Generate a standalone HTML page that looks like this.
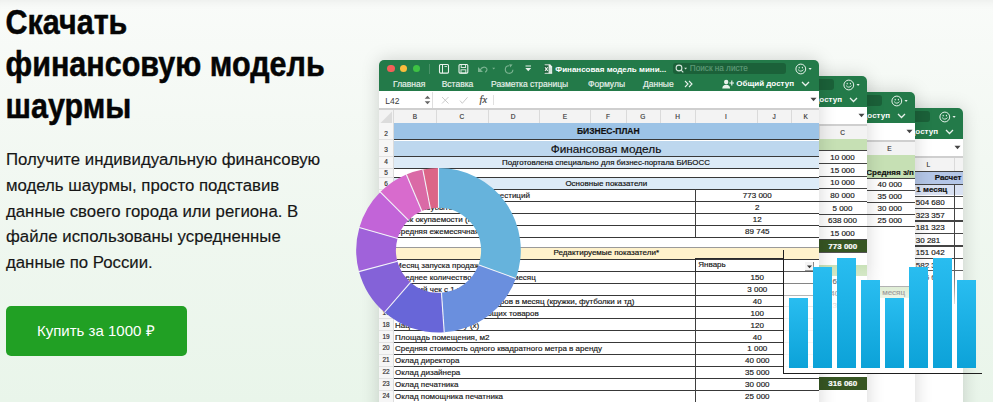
<!DOCTYPE html>
<html><head><meta charset="utf-8">
<style>
*{margin:0;padding:0;box-sizing:border-box}
html,body{width:993px;height:408px;overflow:hidden;background:#fff;font-family:"Liberation Sans",sans-serif}
#stage{position:absolute;left:0;top:0;width:993px;height:402px;overflow:hidden;background:linear-gradient(180deg,#f9fbf9 0%,#f2f8f2 40%,#e9f5ea 100%);box-shadow:inset 0 10px 10px -8px rgba(0,0,0,0.06)}
.a{position:absolute}
.t{position:absolute;white-space:nowrap;line-height:1}
.h1{font-weight:bold;font-size:30.5px;color:#050505;transform-origin:0 25.8px;transform:scaleY(1.13);-webkit-text-stroke:0.45px #050505}
.p{font-size:16.8px;color:#161616;transform-origin:0 14.2px;transform:scaleY(1.03);-webkit-text-stroke:0.15px #161616}
.win{position:absolute;width:440px;height:360px;background:#fff;border-radius:5px 5px 0 0;overflow:hidden;box-shadow:0 0 18px rgba(0,0,0,0.17)}
.tb{position:absolute;left:0;top:0;width:440px;height:31px;background:#237a49}
.fb{position:absolute;left:0;top:31px;width:440px;height:16.5px;background:#fff}
.gl{position:absolute;left:0;top:47.5px;width:440px;height:2px;background:#cfcfcf}
.ch{position:absolute;left:0;top:49.5px;width:440px;height:13.5px;background:#f3f3f3}
.win .t{-webkit-text-stroke:0.18px currentColor}
.cl{font-size:6.5px;color:#444}
.tab{font-size:9.2px;color:#eef5f0}
.hl{position:absolute;height:1px;background:#3d3d3d}
.vl{position:absolute;width:1px;background:#3d3d3d}
</style></head><body><div id="stage">

<div class="t h1" style="left:5.5px;top:7.9px">Скачать</div>
<div class="t h1" style="left:5.5px;top:49.6px">финансовую модель</div>
<div class="t h1" style="left:5.5px;top:91.5px">шаурмы</div>
<div class="t p" style="left:6px;top:152.0px">Получите индивидуальную финансовую</div>
<div class="t p" style="left:6px;top:177.8px">модель шаурмы, просто подставив</div>
<div class="t p" style="left:6px;top:203.7px">данные своего города или региона. В</div>
<div class="t p" style="left:6px;top:229.4px">файле использованы усредненные</div>
<div class="t p" style="left:6px;top:255.1px">данные по России.</div>
<div class="a" style="left:6px;top:306px;width:181px;height:50px;background:#21a024;border-radius:5px"></div>
<div class="t" style="left:37px;top:323.2px;font-size:15px;color:#fff">Купить за 1000 ₽</div>
<div class="win" style="left:379px;top:60px;z-index:4"><div class="tb"></div><div class="a" style="left:8.3px;top:4.9px;width:7.4px;height:7.4px;border-radius:50%;background:#f25f58"></div><div class="a" style="left:20.8px;top:4.9px;width:7.4px;height:7.4px;border-radius:50%;background:#f9bd3d"></div><div class="a" style="left:33.6px;top:4.9px;width:7.4px;height:7.4px;border-radius:50%;background:#3ec244"></div><div class="a" style="left:49.60px;top:3.50px;width:0.80px;height:10.50px;background:rgba(255,255,255,0.18);"></div><svg class="a" style="left:59px;top:3px" width="100" height="12" viewBox="0 0 100 12"><rect x="1.5" y="1.5" width="9" height="8.6" rx="1" fill="none" stroke="#e9f2ec" stroke-width="1.1"/><line x1="4.5" y1="1.5" x2="4.5" y2="10" stroke="#e9f2ec" stroke-width="1"/><path d="M6.5 3.5h2.5" stroke="#e9f2ec" stroke-width="0.8"/><rect x="21" y="1.5" width="8.8" height="8.6" rx="1" fill="none" stroke="#e9f2ec" stroke-width="1.1"/><rect x="23.2" y="1.5" width="4.4" height="3" fill="none" stroke="#e9f2ec" stroke-width="0.9"/><rect x="23" y="6.8" width="4.8" height="3.3" fill="none" stroke="#e9f2ec" stroke-width="0.9"/><path d="M40 8.9 L40 3.9 L45 8.9 Z" fill="#7bb391"/><path d="M41.8 7.2 Q44.6 3 47.6 4.4 Q50.6 6.4 47.2 9.2" fill="none" stroke="#7bb391" stroke-width="1.15"/><path d="M54.2 4.7 L57.2 4.7 L55.7 6.5 Z" fill="#7bb391"/><path d="M74.9 6.8 A3.8 3.8 0 1 1 71.1 2.7" fill="none" stroke="#7bb391" stroke-width="1.15"/><path d="M71.2 1.2 L74.6 1.4 L72.2 4.6 Z" fill="#7bb391"/><line x1="87.5" y1="3" x2="93" y2="3" stroke="#e9f2ec" stroke-width="1"/><path d="M87.3 5 L93.2 5 L90.25 8.3 Z" fill="#e9f2ec"/></svg><svg class="a" style="left:163.5px;top:2.8px" width="12" height="12" viewBox="0 0 12 12"><path d="M1 1.2 H7.6 L9.6 3.2 V10.8 H1 Z" fill="#1d5f3a"/><path d="M5.6 1.8 H7.6 L9.2 3.4 V10.3 H5.6 Z" fill="#eef5f0"/><path d="M1.6 1.8 H7.4 M1.6 10.3 H9.2" stroke="#eef5f0" stroke-width="0.9"/><path d="M2 4.2 L4.7 7.9 M4.7 4.2 L2 7.9" stroke="#eef5f0" stroke-width="1.1"/><path d="M6.8 4.5 V9.5 M8 4.5 V9.5" stroke="#9fc7ae" stroke-width="0.5"/></svg><div class="t" style="left:176.3px;top:5.63px;font-size:8px;color:#ffffff;font-weight:bold;-webkit-text-stroke:0;">Финансовая модель мини...</div><div class="t" style="left:14.0px;top:20.10px;font-size:8.5px;color:#e6f0ea;">Главная</div><div class="t" style="left:62.7px;top:20.10px;font-size:8.5px;color:#e6f0ea;">Вставка</div><div class="t" style="left:112.0px;top:20.10px;font-size:8.5px;color:#e6f0ea;">Разметка страницы</div><div class="t" style="left:209.0px;top:20.10px;font-size:8.5px;color:#e6f0ea;">Формулы</div><div class="t" style="left:264.0px;top:20.10px;font-size:8.5px;color:#e6f0ea;">Данные</div><svg class="a" style="left:305px;top:20px" width="9" height="8" viewBox="0 0 9 8"><path d="M1 1 L4 4 L1 7 M5 1 L8 4 L5 7" fill="none" stroke="#e6f0ea" stroke-width="1.1"/></svg><div class="a" style="left:293.50px;top:2.70px;width:113.00px;height:11.60px;background:#1b6139;border-radius:3px"></div><svg class="a" style="left:296px;top:4px" width="14" height="10" viewBox="0 0 14 10"><circle cx="4" cy="4" r="2.9" fill="none" stroke="#d5e6dc" stroke-width="1.1"/><line x1="6.1" y1="6.1" x2="8.3" y2="8.3" stroke="#d5e6dc" stroke-width="1.2"/><path d="M9.2 3.8 L12 3.8 L10.6 5.4 Z" fill="#d5e6dc"/></svg><div class="t" style="left:310.8px;top:4.86px;font-size:8.2px;color:#5e9a77;">Поиск на листе</div><svg class="a" style="left:415.5px;top:2.8px" width="18" height="12" viewBox="0 0 18 12"><circle cx="5.8" cy="6" r="4.9" fill="none" stroke="#e8f2ec" stroke-width="1"/><ellipse cx="4.2" cy="4.6" rx="0.6" ry="0.9" fill="#e8f2ec"/><ellipse cx="7.4" cy="4.6" rx="0.6" ry="0.9" fill="#e8f2ec"/><path d="M3.1 6.6 Q5.8 9.8 8.5 6.6" fill="none" stroke="#e8f2ec" stroke-width="0.9"/><path d="M13.5 5 L16.7 5 L15.1 7 Z" fill="#e8f2ec"/></svg><svg class="a" style="left:343px;top:19px" width="12" height="10" viewBox="0 0 12 10"><circle cx="4.2" cy="3" r="2.2" fill="#e9f2ec"/><path d="M0.3 9.5 Q0.5 5.8 4.2 5.8 Q7.9 5.8 8.1 9.5 Z" fill="#e9f2ec"/><path d="M9.8 1.5 V6.5 M7.3 4 H12" stroke="#e9f2ec" stroke-width="1.2"/></svg><div class="t" style="left:357.3px;top:20.43px;font-size:8px;color:#ffffff;font-weight:bold;-webkit-text-stroke:0;">Общий доступ</div><svg class="a" style="left:422px;top:21px" width="9" height="6" viewBox="0 0 9 6"><path d="M1 1 L4.5 4.5 L8 1" fill="none" stroke="#e9f2ec" stroke-width="1.3"/></svg><div class="fb"></div><div class="t" style="left:6.3px;top:36.60px;font-size:8.5px;color:#3a3a3a;-webkit-text-stroke:0;">L42</div><svg class="a" style="left:45px;top:35px" width="7" height="10" viewBox="0 0 7 10"><path d="M0.7 3.8 L3.5 0.8 L6.3 3.8 Z M0.7 6.2 L3.5 9.2 L6.3 6.2 Z" fill="#666"/></svg><div class="a" style="left:53.40px;top:31.50px;width:0.80px;height:16.00px;background:#dedede;"></div><svg class="a" style="left:62px;top:36px" width="30" height="9" viewBox="0 0 30 9"><path d="M1 1 L7.5 7.5 M7.5 1 L1 7.5" stroke="#c4c4c4" stroke-width="0.9"/><path d="M19 4.6 L21.3 7.3 L26.5 1.3" fill="none" stroke="#c4c4c4" stroke-width="0.9"/></svg><div class="t" style="left:100.5px;top:35.31px;font-size:10.5px;color:#444;font-family:'Liberation Serif',serif;"><i>fx</i></div><div class="a" style="left:113.60px;top:34.50px;width:0.80px;height:10.00px;background:#e0e0e0;"></div><svg class="a" style="left:431px;top:37px" width="7" height="5" viewBox="0 0 7 5"><path d="M0.5 0.8 L6.5 0.8 L3.5 4.3 Z" fill="#444"/></svg><div class="gl"></div><div class="ch"></div><div class="a" style="left:-379px;top:-60px;width:993px;height:402px"><svg class="a" style="left:380px;top:110.5px" width="12" height="12" viewBox="0 0 12 12"><path d="M12 0.5 L12 12 L0.5 12 Z" fill="#dcdcdc"/></svg><div class="a" style="left:393.00px;top:109.50px;width:0.80px;height:13.50px;background:#dadada;"></div><div class="a" style="left:436.20px;top:109.50px;width:0.80px;height:13.50px;background:#dadada;"></div><div class="a" style="left:488.40px;top:109.50px;width:0.80px;height:13.50px;background:#dadada;"></div><div class="a" style="left:539.00px;top:109.50px;width:0.80px;height:13.50px;background:#dadada;"></div><div class="a" style="left:590.00px;top:109.50px;width:0.80px;height:13.50px;background:#dadada;"></div><div class="a" style="left:626.00px;top:109.50px;width:0.80px;height:13.50px;background:#dadada;"></div><div class="a" style="left:660.00px;top:109.50px;width:0.80px;height:13.50px;background:#dadada;"></div><div class="a" style="left:695.00px;top:109.50px;width:0.80px;height:13.50px;background:#dadada;"></div><div class="a" style="left:756.50px;top:109.50px;width:0.80px;height:13.50px;background:#dadada;"></div><div class="a" style="left:791.40px;top:109.50px;width:0.80px;height:13.50px;background:#dadada;"></div><div class="t" style="left:264.9px;width:300px;text-align:center;top:113.80px;font-size:6.5px;color:#3a3a3a;">B</div><div class="t" style="left:311.9px;width:300px;text-align:center;top:113.80px;font-size:6.5px;color:#3a3a3a;">C</div><div class="t" style="left:363.0px;width:300px;text-align:center;top:113.80px;font-size:6.5px;color:#3a3a3a;">D</div><div class="t" style="left:414.9px;width:300px;text-align:center;top:113.80px;font-size:6.5px;color:#3a3a3a;">E</div><div class="t" style="left:458.0px;width:300px;text-align:center;top:113.80px;font-size:6.5px;color:#3a3a3a;">F</div><div class="t" style="left:492.8px;width:300px;text-align:center;top:113.80px;font-size:6.5px;color:#3a3a3a;">G</div><div class="t" style="left:527.7px;width:300px;text-align:center;top:113.80px;font-size:6.5px;color:#3a3a3a;">H</div><div class="t" style="left:575.9px;width:300px;text-align:center;top:113.80px;font-size:6.5px;color:#3a3a3a;">I</div><div class="t" style="left:624.0px;width:300px;text-align:center;top:113.80px;font-size:6.5px;color:#3a3a3a;">J</div><div class="t" style="left:655.6px;width:300px;text-align:center;top:113.80px;font-size:6.5px;color:#3a3a3a;">K</div><div class="a" style="left:379.00px;top:123.00px;width:440.00px;height:0.80px;background:#d0d0d0;"></div><div class="a" style="left:379.00px;top:123.00px;width:14.00px;height:300.00px;background:#f6f6f6;"></div><div class="a" style="left:393.00px;top:123.00px;width:0.80px;height:300.00px;background:#dcdcdc;"></div><div class="a" style="left:393.80px;top:123.00px;width:440.00px;height:16.50px;background:#9cc3e6;"></div><div class="a" style="left:393.80px;top:140.50px;width:440.00px;height:15.50px;background:#bdd7ee;"></div><div class="a" style="left:393.80px;top:157.00px;width:440.00px;height:11.00px;background:#ddebf7;"></div><div class="a" style="left:393.80px;top:177.50px;width:440.00px;height:11.70px;background:#ddebf7;"></div><div class="a" style="left:393.80px;top:247.50px;width:440.00px;height:11.50px;background:#fff2cc;"></div><div class="a" style="left:393.80px;top:139.00px;width:440.00px;height:1.00px;background:#383838;"></div><div class="a" style="left:393.80px;top:156.00px;width:440.00px;height:1.00px;background:#383838;"></div><div class="a" style="left:393.80px;top:168.00px;width:440.00px;height:1.00px;background:#383838;"></div><div class="a" style="left:393.80px;top:177.00px;width:440.00px;height:1.00px;background:#383838;"></div><div class="a" style="left:393.80px;top:189.00px;width:440.00px;height:1.00px;background:#383838;"></div><div class="a" style="left:393.80px;top:201.00px;width:440.00px;height:1.00px;background:#383838;"></div><div class="a" style="left:393.80px;top:213.00px;width:440.00px;height:1.00px;background:#383838;"></div><div class="a" style="left:393.80px;top:225.00px;width:440.00px;height:1.00px;background:#383838;"></div><div class="a" style="left:393.80px;top:237.00px;width:440.00px;height:1.00px;background:#383838;"></div><div class="a" style="left:393.80px;top:259.00px;width:440.00px;height:1.00px;background:#383838;"></div><div class="a" style="left:393.80px;top:271.00px;width:440.00px;height:1.00px;background:#383838;"></div><div class="a" style="left:393.80px;top:283.00px;width:440.00px;height:1.00px;background:#383838;"></div><div class="a" style="left:393.80px;top:295.00px;width:440.00px;height:1.00px;background:#383838;"></div><div class="a" style="left:393.80px;top:306.00px;width:440.00px;height:1.00px;background:#383838;"></div><div class="a" style="left:393.80px;top:318.00px;width:440.00px;height:1.00px;background:#383838;"></div><div class="a" style="left:393.80px;top:330.00px;width:440.00px;height:1.00px;background:#383838;"></div><div class="a" style="left:393.80px;top:342.00px;width:440.00px;height:1.00px;background:#383838;"></div><div class="a" style="left:393.80px;top:354.00px;width:440.00px;height:1.00px;background:#383838;"></div><div class="a" style="left:393.80px;top:366.00px;width:440.00px;height:1.00px;background:#383838;"></div><div class="a" style="left:393.80px;top:378.00px;width:440.00px;height:1.00px;background:#383838;"></div><div class="a" style="left:393.80px;top:390.00px;width:440.00px;height:1.00px;background:#383838;"></div><div class="a" style="left:393.80px;top:246.60px;width:440.00px;height:0.80px;background:#9a9a9a;"></div><div class="a" style="left:379.00px;top:139.10px;width:14.00px;height:0.80px;background:#e2e2e2;"></div><div class="a" style="left:379.00px;top:155.80px;width:14.00px;height:0.80px;background:#e2e2e2;"></div><div class="a" style="left:379.00px;top:167.60px;width:14.00px;height:0.80px;background:#e2e2e2;"></div><div class="a" style="left:379.00px;top:177.10px;width:14.00px;height:0.80px;background:#e2e2e2;"></div><div class="a" style="left:379.00px;top:189.00px;width:14.00px;height:0.80px;background:#e2e2e2;"></div><div class="a" style="left:379.00px;top:200.90px;width:14.00px;height:0.80px;background:#e2e2e2;"></div><div class="a" style="left:379.00px;top:212.80px;width:14.00px;height:0.80px;background:#e2e2e2;"></div><div class="a" style="left:379.00px;top:224.70px;width:14.00px;height:0.80px;background:#e2e2e2;"></div><div class="a" style="left:379.00px;top:236.60px;width:14.00px;height:0.80px;background:#e2e2e2;"></div><div class="a" style="left:379.00px;top:258.80px;width:14.00px;height:0.80px;background:#e2e2e2;"></div><div class="a" style="left:379.00px;top:270.69px;width:14.00px;height:0.80px;background:#e2e2e2;"></div><div class="a" style="left:379.00px;top:282.58px;width:14.00px;height:0.80px;background:#e2e2e2;"></div><div class="a" style="left:379.00px;top:294.47px;width:14.00px;height:0.80px;background:#e2e2e2;"></div><div class="a" style="left:379.00px;top:306.36px;width:14.00px;height:0.80px;background:#e2e2e2;"></div><div class="a" style="left:379.00px;top:318.25px;width:14.00px;height:0.80px;background:#e2e2e2;"></div><div class="a" style="left:379.00px;top:330.14px;width:14.00px;height:0.80px;background:#e2e2e2;"></div><div class="a" style="left:379.00px;top:342.03px;width:14.00px;height:0.80px;background:#e2e2e2;"></div><div class="a" style="left:379.00px;top:353.92px;width:14.00px;height:0.80px;background:#e2e2e2;"></div><div class="a" style="left:379.00px;top:365.81px;width:14.00px;height:0.80px;background:#e2e2e2;"></div><div class="a" style="left:379.00px;top:377.70px;width:14.00px;height:0.80px;background:#e2e2e2;"></div><div class="a" style="left:379.00px;top:389.59px;width:14.00px;height:0.80px;background:#e2e2e2;"></div><div class="a" style="left:379.00px;top:246.60px;width:14.00px;height:0.80px;background:#e2e2e2;"></div><div class="a" style="left:694.50px;top:189.40px;width:1.10px;height:47.60px;background:#3f3f3f;"></div><div class="a" style="left:694.50px;top:259.20px;width:1.10px;height:200.00px;background:#3f3f3f;"></div><div class="t" style="left:236.0px;width:300px;text-align:center;top:130.70px;font-size:6.5px;color:#333;">2</div><div class="t" style="left:236.0px;width:300px;text-align:center;top:147.30px;font-size:6.5px;color:#333;">3</div><div class="t" style="left:236.0px;width:300px;text-align:center;top:159.40px;font-size:6.5px;color:#333;">4</div><div class="t" style="left:236.0px;width:300px;text-align:center;top:169.60px;font-size:6.5px;color:#333;">5</div><div class="t" style="left:236.0px;width:300px;text-align:center;top:180.90px;font-size:6.5px;color:#333;">6</div><div class="t" style="left:236.0px;width:300px;text-align:center;top:192.45px;font-size:6.5px;color:#333;">7</div><div class="t" style="left:236.0px;width:300px;text-align:center;top:204.35px;font-size:6.5px;color:#333;">8</div><div class="t" style="left:236.0px;width:300px;text-align:center;top:216.25px;font-size:6.5px;color:#333;">9</div><div class="t" style="left:236.0px;width:300px;text-align:center;top:228.15px;font-size:6.5px;color:#333;">10</div><div class="t" style="left:236.0px;width:300px;text-align:center;top:239.10px;font-size:6.5px;color:#333;">11</div><div class="t" style="left:236.0px;width:300px;text-align:center;top:250.10px;font-size:6.5px;color:#333;">12</div><div class="t" style="left:236.0px;width:300px;text-align:center;top:262.24px;font-size:6.5px;color:#333;">13</div><div class="t" style="left:236.0px;width:300px;text-align:center;top:274.13px;font-size:6.5px;color:#333;">14</div><div class="t" style="left:236.0px;width:300px;text-align:center;top:286.02px;font-size:6.5px;color:#333;">15</div><div class="t" style="left:236.0px;width:300px;text-align:center;top:297.91px;font-size:6.5px;color:#333;">16</div><div class="t" style="left:236.0px;width:300px;text-align:center;top:309.80px;font-size:6.5px;color:#333;">17</div><div class="t" style="left:236.0px;width:300px;text-align:center;top:321.69px;font-size:6.5px;color:#333;">18</div><div class="t" style="left:236.0px;width:300px;text-align:center;top:333.58px;font-size:6.5px;color:#333;">19</div><div class="t" style="left:236.0px;width:300px;text-align:center;top:345.47px;font-size:6.5px;color:#333;">20</div><div class="t" style="left:236.0px;width:300px;text-align:center;top:357.36px;font-size:6.5px;color:#333;">21</div><div class="t" style="left:236.0px;width:300px;text-align:center;top:369.25px;font-size:6.5px;color:#333;">22</div><div class="t" style="left:236.0px;width:300px;text-align:center;top:381.14px;font-size:6.5px;color:#333;">23</div><div class="t" style="left:236.0px;width:300px;text-align:center;top:393.03px;font-size:6.5px;color:#333;">24</div><div class="t" style="left:458.3px;width:300px;text-align:center;top:127.10px;font-size:8.5px;color:#111;font-weight:bold;">БИЗНЕС-ПЛАН</div><div class="t" style="left:456.0px;width:300px;text-align:center;top:143.61px;font-size:11.8px;color:#111;">Финансовая модель</div><div class="t" style="left:456.0px;width:300px;text-align:center;top:159.11px;font-size:7.9px;color:#111;">Подготовлена специально для бизнес-портала БИБОСС</div><div class="t" style="left:456.3px;width:300px;text-align:center;top:180.23px;font-size:8px;color:#111;">Основные показатели</div><div class="t" style="left:456.3px;width:300px;text-align:center;top:249.33px;font-size:8px;color:#111;">Редактируемые показатели*</div><div class="t" style="left:395.0px;top:192.38px;font-size:8px;color:#1a1a1a;">Сумма первоначальных инвестиций</div><div class="t" style="left:607.3px;width:300px;text-align:center;top:192.38px;font-size:8px;color:#1a1a1a;">773 000</div><div class="t" style="left:395.0px;top:204.28px;font-size:8px;color:#1a1a1a;">Точка безубыточности (мес)</div><div class="t" style="left:607.3px;width:300px;text-align:center;top:204.28px;font-size:8px;color:#1a1a1a;">2</div><div class="t" style="left:395.0px;top:216.18px;font-size:8px;color:#1a1a1a;">Срок окупаемости (мес)</div><div class="t" style="left:607.3px;width:300px;text-align:center;top:216.18px;font-size:8px;color:#1a1a1a;">12</div><div class="t" style="left:395.0px;top:228.08px;font-size:8px;color:#1a1a1a;">Средняя ежемесячная прибыль</div><div class="t" style="left:607.3px;width:300px;text-align:center;top:228.08px;font-size:8px;color:#1a1a1a;">89 745</div><div class="t" style="left:395.0px;top:262.17px;font-size:8px;color:#1a1a1a;">Месяц запуска продаж</div><div class="t" style="left:395.0px;top:274.06px;font-size:8px;color:#1a1a1a;">Среднее количество шаурмы в месяц</div><div class="t" style="left:607.3px;width:300px;text-align:center;top:274.06px;font-size:8px;color:#1a1a1a;">150</div><div class="t" style="left:395.0px;top:285.95px;font-size:8px;color:#1a1a1a;">Средний чек с 1 покупателя</div><div class="t" style="left:607.3px;width:300px;text-align:center;top:285.95px;font-size:8px;color:#1a1a1a;">3 000</div><div class="t" style="left:395.0px;top:297.84px;font-size:8px;color:#1a1a1a;">Количество проданных товаров в месяц (кружки, футболки и тд)</div><div class="t" style="left:607.3px;width:300px;text-align:center;top:297.84px;font-size:8px;color:#1a1a1a;">40</div><div class="t" style="left:395.0px;top:309.73px;font-size:8px;color:#1a1a1a;">Средняя цена сопутствующих товаров</div><div class="t" style="left:607.3px;width:300px;text-align:center;top:309.73px;font-size:8px;color:#1a1a1a;">100</div><div class="t" style="left:395.0px;top:321.62px;font-size:8px;color:#1a1a1a;">Наценка на закупку (х)</div><div class="t" style="left:607.3px;width:300px;text-align:center;top:321.62px;font-size:8px;color:#1a1a1a;">120</div><div class="t" style="left:395.0px;top:333.51px;font-size:8px;color:#1a1a1a;">Площадь помещения, м2</div><div class="t" style="left:607.3px;width:300px;text-align:center;top:333.51px;font-size:8px;color:#1a1a1a;">40</div><div class="t" style="left:395.0px;top:345.40px;font-size:8px;color:#1a1a1a;">Средняя стоимость одного квадратного метра в аренду</div><div class="t" style="left:607.3px;width:300px;text-align:center;top:345.40px;font-size:8px;color:#1a1a1a;">1 000</div><div class="t" style="left:395.0px;top:357.29px;font-size:8px;color:#1a1a1a;">Оклад директора</div><div class="t" style="left:607.3px;width:300px;text-align:center;top:357.29px;font-size:8px;color:#1a1a1a;">40 000</div><div class="t" style="left:395.0px;top:369.18px;font-size:8px;color:#1a1a1a;">Оклад дизайнера</div><div class="t" style="left:607.3px;width:300px;text-align:center;top:369.18px;font-size:8px;color:#1a1a1a;">35 000</div><div class="t" style="left:395.0px;top:381.07px;font-size:8px;color:#1a1a1a;">Оклад печатника</div><div class="t" style="left:607.3px;width:300px;text-align:center;top:381.07px;font-size:8px;color:#1a1a1a;">30 000</div><div class="t" style="left:395.0px;top:392.96px;font-size:8px;color:#1a1a1a;">Оклад помощника печатника</div><div class="t" style="left:607.3px;width:300px;text-align:center;top:392.96px;font-size:8px;color:#1a1a1a;">25 000</div><div class="a" style="left:694.50px;top:258.40px;width:89.50px;height:13.20px;background:transparent;border:1.3px solid #2a2a2a"></div><div class="t" style="left:698.3px;top:261.17px;font-size:8px;color:#1a1a1a;">Январь</div><div class="a" style="left:804.50px;top:261.50px;width:9.00px;height:9.00px;background:#f4f4f4;border-right:1px solid #888;border-bottom:1px solid #888"></div><svg class="a" style="left:804.5px;top:261.5px" width="9" height="9" viewBox="0 0 9 9"><path d="M2 3.5 L7 3.5 L4.5 6.3 Z" fill="#222"/></svg></div></div>
<div class="win" style="left:427px;top:76px;z-index:3"><div class="tb"></div><div class="a" style="left:293.50px;top:2.70px;width:113.00px;height:11.60px;background:#1b6139;border-radius:3px"></div><svg class="a" style="left:415.5px;top:2.8px" width="18" height="12" viewBox="0 0 18 12"><circle cx="5.8" cy="6" r="4.9" fill="none" stroke="#e8f2ec" stroke-width="1"/><ellipse cx="4.2" cy="4.6" rx="0.6" ry="0.9" fill="#e8f2ec"/><ellipse cx="7.4" cy="4.6" rx="0.6" ry="0.9" fill="#e8f2ec"/><path d="M3.1 6.6 Q5.8 9.8 8.5 6.6" fill="none" stroke="#e8f2ec" stroke-width="0.9"/><path d="M13.5 5 L16.7 5 L15.1 7 Z" fill="#e8f2ec"/></svg><svg class="a" style="left:343px;top:19px" width="12" height="10" viewBox="0 0 12 10"><circle cx="4.2" cy="3" r="2.2" fill="#e9f2ec"/><path d="M0.3 9.5 Q0.5 5.8 4.2 5.8 Q7.9 5.8 8.1 9.5 Z" fill="#e9f2ec"/><path d="M9.8 1.5 V6.5 M7.3 4 H12" stroke="#e9f2ec" stroke-width="1.2"/></svg><div class="t" style="left:357.3px;top:20.43px;font-size:8px;color:#ffffff;font-weight:bold;-webkit-text-stroke:0;">Общий доступ</div><svg class="a" style="left:422px;top:21px" width="9" height="6" viewBox="0 0 9 6"><path d="M1 1 L4.5 4.5 L8 1" fill="none" stroke="#e9f2ec" stroke-width="1.3"/></svg><div class="fb"></div><svg class="a" style="left:431px;top:37px" width="7" height="5" viewBox="0 0 7 5"><path d="M0.5 0.8 L6.5 0.8 L3.5 4.3 Z" fill="#444"/></svg><div class="gl"></div><div class="ch"></div><div class="a" style="left:-427px;top:-76px;width:993px;height:402px"><div class="a" style="left:818.50px;top:125.50px;width:0.80px;height:13.50px;background:#dadada;"></div><div class="t" style="left:692.5px;width:300px;text-align:center;top:129.80px;font-size:6.5px;color:#3a3a3a;">C</div><div class="a" style="left:427.00px;top:139.00px;width:440.00px;height:0.80px;background:#d0d0d0;"></div><div class="a" style="left:427.00px;top:139.30px;width:440.00px;height:11.30px;background:#c6e0b4;"></div><div class="t" style="left:692.5px;width:300px;text-align:center;top:153.98px;font-size:8px;color:#1a1a1a;">10 000</div><div class="t" style="left:692.5px;width:300px;text-align:center;top:166.68px;font-size:8px;color:#1a1a1a;">15 000</div><div class="t" style="left:692.5px;width:300px;text-align:center;top:179.38px;font-size:8px;color:#1a1a1a;">10 000</div><div class="t" style="left:692.5px;width:300px;text-align:center;top:192.08px;font-size:8px;color:#1a1a1a;">80 000</div><div class="t" style="left:692.5px;width:300px;text-align:center;top:204.78px;font-size:8px;color:#1a1a1a;">5 000</div><div class="t" style="left:692.5px;width:300px;text-align:center;top:217.48px;font-size:8px;color:#1a1a1a;">638 000</div><div class="t" style="left:692.5px;width:300px;text-align:center;top:230.18px;font-size:8px;color:#1a1a1a;">15 000</div><div class="a" style="left:819.00px;top:239.50px;width:48.00px;height:12.70px;background:#375623;"></div><div class="t" style="left:692.8px;width:300px;text-align:center;top:242.68px;font-size:8px;color:#fff;font-weight:bold;">773 000</div><div class="a" style="left:427.00px;top:150.10px;width:440.00px;height:1.20px;background:#444;"></div><div class="a" style="left:427.00px;top:162.80px;width:440.00px;height:1.20px;background:#444;"></div><div class="a" style="left:427.00px;top:175.50px;width:440.00px;height:1.20px;background:#444;"></div><div class="a" style="left:427.00px;top:188.20px;width:440.00px;height:1.20px;background:#444;"></div><div class="a" style="left:427.00px;top:200.90px;width:440.00px;height:1.20px;background:#444;"></div><div class="a" style="left:427.00px;top:213.60px;width:440.00px;height:1.20px;background:#444;"></div><div class="a" style="left:427.00px;top:226.30px;width:440.00px;height:1.20px;background:#444;"></div><div class="a" style="left:427.00px;top:239.00px;width:440.00px;height:1.20px;background:#444;"></div><div class="a" style="left:819.00px;top:251.70px;width:48.00px;height:1.10px;background:#555;"></div><div class="a" style="left:819.00px;top:264.80px;width:48.00px;height:11.00px;background:#c6e0b4;"></div><div class="t" style="left:692.5px;width:300px;text-align:center;top:278.23px;font-size:8px;color:#1a1a1a;">6 000</div><div class="t" style="left:692.5px;width:300px;text-align:center;top:290.23px;font-size:8px;color:#1a1a1a;">40 000</div><div class="t" style="left:692.5px;width:300px;text-align:center;top:302.23px;font-size:8px;color:#1a1a1a;">3 000</div><div class="a" style="left:819.00px;top:377.20px;width:48.00px;height:12.60px;background:#375623;"></div><div class="t" style="left:692.8px;width:300px;text-align:center;top:379.83px;font-size:8px;color:#fff;font-weight:bold;">316 060</div></div></div>
<div class="win" style="left:475px;top:92px;z-index:2"><div class="tb"></div><div class="a" style="left:293.50px;top:2.70px;width:113.00px;height:11.60px;background:#1b6139;border-radius:3px"></div><svg class="a" style="left:415.5px;top:2.8px" width="18" height="12" viewBox="0 0 18 12"><circle cx="5.8" cy="6" r="4.9" fill="none" stroke="#e8f2ec" stroke-width="1"/><ellipse cx="4.2" cy="4.6" rx="0.6" ry="0.9" fill="#e8f2ec"/><ellipse cx="7.4" cy="4.6" rx="0.6" ry="0.9" fill="#e8f2ec"/><path d="M3.1 6.6 Q5.8 9.8 8.5 6.6" fill="none" stroke="#e8f2ec" stroke-width="0.9"/><path d="M13.5 5 L16.7 5 L15.1 7 Z" fill="#e8f2ec"/></svg><svg class="a" style="left:343px;top:19px" width="12" height="10" viewBox="0 0 12 10"><circle cx="4.2" cy="3" r="2.2" fill="#e9f2ec"/><path d="M0.3 9.5 Q0.5 5.8 4.2 5.8 Q7.9 5.8 8.1 9.5 Z" fill="#e9f2ec"/><path d="M9.8 1.5 V6.5 M7.3 4 H12" stroke="#e9f2ec" stroke-width="1.2"/></svg><div class="t" style="left:357.3px;top:20.43px;font-size:8px;color:#ffffff;font-weight:bold;-webkit-text-stroke:0;">Общий доступ</div><svg class="a" style="left:422px;top:21px" width="9" height="6" viewBox="0 0 9 6"><path d="M1 1 L4.5 4.5 L8 1" fill="none" stroke="#e9f2ec" stroke-width="1.3"/></svg><div class="fb"></div><svg class="a" style="left:431px;top:37px" width="7" height="5" viewBox="0 0 7 5"><path d="M0.5 0.8 L6.5 0.8 L3.5 4.3 Z" fill="#444"/></svg><div class="gl"></div><div class="ch"></div><div class="a" style="left:-475px;top:-92px;width:993px;height:402px"><div class="t" style="left:739.5px;width:300px;text-align:center;top:145.80px;font-size:6.5px;color:#3a3a3a;">E</div><div class="a" style="left:475.00px;top:155.00px;width:440.00px;height:0.80px;background:#d0d0d0;"></div><div class="a" style="left:475.00px;top:155.20px;width:440.00px;height:22.60px;background:#c6e0b4;"></div><div class="t" style="left:866.3px;top:168.63px;font-size:8px;color:#111;font-weight:bold;">Средняя з/п в месяц</div><div class="t" style="left:739.8px;width:300px;text-align:center;top:180.83px;font-size:8px;color:#1a1a1a;">40 000</div><div class="t" style="left:739.8px;width:300px;text-align:center;top:192.73px;font-size:8px;color:#1a1a1a;">35 000</div><div class="t" style="left:739.8px;width:300px;text-align:center;top:204.63px;font-size:8px;color:#1a1a1a;">30 000</div><div class="t" style="left:739.8px;width:300px;text-align:center;top:216.53px;font-size:8px;color:#1a1a1a;">25 000</div><div class="a" style="left:475.00px;top:178.30px;width:440.00px;height:1.10px;background:#444;"></div><div class="a" style="left:475.00px;top:190.20px;width:440.00px;height:1.10px;background:#444;"></div><div class="a" style="left:475.00px;top:202.10px;width:440.00px;height:1.10px;background:#444;"></div><div class="a" style="left:475.00px;top:214.00px;width:440.00px;height:1.10px;background:#444;"></div><div class="a" style="left:475.00px;top:225.90px;width:440.00px;height:1.10px;background:#444;"></div><div class="a" style="left:475.00px;top:285.50px;width:440.00px;height:1.00px;background:#777;"></div><div class="a" style="left:475.00px;top:286.50px;width:440.00px;height:11.00px;background:#c6e0b4;"></div><div class="t" style="left:605.0px;width:300px;text-align:right;top:288.73px;font-size:8px;color:#111;">Выручка в месяц</div></div></div>
<div class="win" style="left:523px;top:108px;z-index:1"><div class="tb"></div><div class="a" style="left:293.50px;top:2.70px;width:113.00px;height:11.60px;background:#1b6139;border-radius:3px"></div><svg class="a" style="left:415.5px;top:2.8px" width="18" height="12" viewBox="0 0 18 12"><circle cx="5.8" cy="6" r="4.9" fill="none" stroke="#e8f2ec" stroke-width="1"/><ellipse cx="4.2" cy="4.6" rx="0.6" ry="0.9" fill="#e8f2ec"/><ellipse cx="7.4" cy="4.6" rx="0.6" ry="0.9" fill="#e8f2ec"/><path d="M3.1 6.6 Q5.8 9.8 8.5 6.6" fill="none" stroke="#e8f2ec" stroke-width="0.9"/><path d="M13.5 5 L16.7 5 L15.1 7 Z" fill="#e8f2ec"/></svg><svg class="a" style="left:343px;top:19px" width="12" height="10" viewBox="0 0 12 10"><circle cx="4.2" cy="3" r="2.2" fill="#e9f2ec"/><path d="M0.3 9.5 Q0.5 5.8 4.2 5.8 Q7.9 5.8 8.1 9.5 Z" fill="#e9f2ec"/><path d="M9.8 1.5 V6.5 M7.3 4 H12" stroke="#e9f2ec" stroke-width="1.2"/></svg><div class="t" style="left:357.3px;top:20.43px;font-size:8px;color:#ffffff;font-weight:bold;-webkit-text-stroke:0;">Общий доступ</div><svg class="a" style="left:422px;top:21px" width="9" height="6" viewBox="0 0 9 6"><path d="M1 1 L4.5 4.5 L8 1" fill="none" stroke="#e9f2ec" stroke-width="1.3"/></svg><div class="fb"></div><svg class="a" style="left:431px;top:37px" width="7" height="5" viewBox="0 0 7 5"><path d="M0.5 0.8 L6.5 0.8 L3.5 4.3 Z" fill="#444"/></svg><div class="gl"></div><div class="ch"></div><div class="a" style="left:-523px;top:-108px;width:993px;height:402px"><div class="t" style="left:778.4px;width:300px;text-align:center;top:161.80px;font-size:6.5px;color:#3a3a3a;">L</div><div class="a" style="left:954.00px;top:157.50px;width:0.80px;height:13.50px;background:#dadada;"></div><div class="a" style="left:902.00px;top:157.50px;width:0.80px;height:13.50px;background:#dadada;"></div><div class="a" style="left:523.00px;top:171.00px;width:440.00px;height:0.80px;background:#d0d0d0;"></div><div class="a" style="left:523.00px;top:171.40px;width:440.00px;height:12.70px;background:#b4c6e7;"></div><div class="t" style="left:661.5px;width:300px;text-align:right;top:174.03px;font-size:8px;color:#111;font-weight:bold;">Расчет</div><div class="a" style="left:523.00px;top:184.10px;width:440.00px;height:11.40px;background:#d9e1f2;"></div><div class="t" style="left:916.3px;top:185.83px;font-size:8px;color:#111;font-weight:bold;">1 месяц</div><div class="t" style="left:915.8px;top:199.37px;font-size:8px;color:#1a1a1a;">504 680</div><div class="t" style="left:915.8px;top:211.85px;font-size:8px;color:#1a1a1a;">323 357</div><div class="t" style="left:915.8px;top:224.33px;font-size:8px;color:#1a1a1a;">181 323</div><div class="t" style="left:915.8px;top:236.81px;font-size:8px;color:#1a1a1a;">30 281</div><div class="t" style="left:915.8px;top:249.29px;font-size:8px;color:#1a1a1a;">151 042</div><div class="t" style="left:915.8px;top:261.77px;font-size:8px;color:#1a1a1a;">582 346</div><div class="t" style="left:915.8px;top:274.25px;font-size:8px;color:#1a1a1a;">496 680</div><div class="a" style="left:523.00px;top:170.90px;width:440.00px;height:1.10px;background:#444;"></div><div class="a" style="left:523.00px;top:183.60px;width:440.00px;height:1.10px;background:#444;"></div><div class="a" style="left:523.00px;top:195.50px;width:440.00px;height:1.10px;background:#444;"></div><div class="a" style="left:523.00px;top:207.98px;width:440.00px;height:1.10px;background:#444;"></div><div class="a" style="left:523.00px;top:220.46px;width:440.00px;height:1.10px;background:#444;"></div><div class="a" style="left:523.00px;top:232.94px;width:440.00px;height:1.10px;background:#444;"></div><div class="a" style="left:523.00px;top:245.42px;width:440.00px;height:1.10px;background:#444;"></div><div class="a" style="left:523.00px;top:257.90px;width:440.00px;height:1.10px;background:#444;"></div><div class="a" style="left:523.00px;top:270.38px;width:440.00px;height:1.10px;background:#444;"></div><div class="a" style="left:953.50px;top:184.10px;width:1.10px;height:120.00px;background:#444;"></div></div></div>
<svg class="a" style="left:0;top:0;z-index:6" width="993" height="402" viewBox="0 0 993 402"><path d="M438.50 167.95 A82.3 82.3 0 0 1 515.84 278.40 L478.53 264.82 A42.6 42.6 0 0 0 438.50 207.65 Z" fill="#66b3dc"/><path d="M515.84 278.40 A82.3 82.3 0 0 1 444.24 332.35 L441.47 292.75 A42.6 42.6 0 0 0 478.53 264.82 Z" fill="#6a8fde"/><path d="M444.24 332.35 A82.3 82.3 0 0 1 384.51 312.36 L410.55 282.40 A42.6 42.6 0 0 0 441.47 292.75 Z" fill="#6866d8"/><path d="M384.51 312.36 A82.3 82.3 0 0 1 359.00 271.55 L397.35 261.28 A42.6 42.6 0 0 0 410.55 282.40 Z" fill="#8462d8"/><path d="M359.00 271.55 A82.3 82.3 0 0 1 359.39 227.57 L397.55 238.51 A42.6 42.6 0 0 0 397.35 261.28 Z" fill="#a062da"/><path d="M359.39 227.57 A82.3 82.3 0 0 1 380.31 192.06 L408.38 220.13 A42.6 42.6 0 0 0 397.55 238.51 Z" fill="#c264d8"/><path d="M380.31 192.06 A82.3 82.3 0 0 1 406.34 174.49 L421.85 211.04 A42.6 42.6 0 0 0 408.38 220.13 Z" fill="#d86bcd"/><path d="M406.34 174.49 A82.3 82.3 0 0 1 422.80 169.46 L430.37 208.43 A42.6 42.6 0 0 0 421.85 211.04 Z" fill="#da6aa6"/><path d="M422.80 169.46 A82.3 82.3 0 0 1 438.50 167.95 L438.50 207.65 A42.6 42.6 0 0 0 430.37 208.43 Z" fill="#dc6587"/><line x1="438.50" y1="207.95" x2="438.50" y2="167.75" stroke="#f2f4fa" stroke-width="1.1"/><line x1="478.25" y1="264.72" x2="516.02" y2="278.47" stroke="#f2f4fa" stroke-width="1.1"/><line x1="441.45" y1="292.45" x2="444.25" y2="332.55" stroke="#f2f4fa" stroke-width="1.1"/><line x1="410.75" y1="282.17" x2="384.38" y2="312.51" stroke="#f2f4fa" stroke-width="1.1"/><line x1="397.64" y1="261.20" x2="358.81" y2="271.60" stroke="#f2f4fa" stroke-width="1.1"/><line x1="397.84" y1="238.59" x2="359.20" y2="227.51" stroke="#f2f4fa" stroke-width="1.1"/><line x1="408.59" y1="220.34" x2="380.16" y2="191.91" stroke="#f2f4fa" stroke-width="1.1"/><line x1="421.97" y1="211.31" x2="406.26" y2="174.31" stroke="#f2f4fa" stroke-width="1.1"/><line x1="430.43" y1="208.73" x2="422.76" y2="169.27" stroke="#f2f4fa" stroke-width="1.1"/></svg>
<div class="a" style="left:0;top:0;z-index:7"><div class="a" style="left:783.5px;top:250px;width:179.5px;height:123px;background:linear-gradient(180deg,rgba(255,255,255,0) 0px,rgba(255,255,255,0) 12px,rgba(255,255,255,0.5) 40px,rgba(255,255,255,0.92) 58px,rgba(255,255,255,0.97) 123px)"></div><div class="a" style="left:789.00px;top:298.2px;width:18.9px;height:69.45px;background:linear-gradient(180deg,#29bdf0,#0ca2d8)"></div><div class="a" style="left:813.05px;top:266.8px;width:18.9px;height:100.85px;background:linear-gradient(180deg,#29bdf0,#0ca2d8)"></div><div class="a" style="left:837.10px;top:258.0px;width:18.9px;height:109.65px;background:linear-gradient(180deg,#29bdf0,#0ca2d8)"></div><div class="a" style="left:861.15px;top:280.1px;width:18.9px;height:87.55px;background:linear-gradient(180deg,#29bdf0,#0ca2d8)"></div><div class="a" style="left:885.20px;top:298.2px;width:18.9px;height:69.45px;background:linear-gradient(180deg,#29bdf0,#0ca2d8)"></div><div class="a" style="left:909.25px;top:266.8px;width:18.9px;height:100.85px;background:linear-gradient(180deg,#29bdf0,#0ca2d8)"></div><div class="a" style="left:933.30px;top:258.0px;width:18.9px;height:109.65px;background:linear-gradient(180deg,#29bdf0,#0ca2d8)"></div><div class="a" style="left:957.35px;top:280.1px;width:18.9px;height:87.55px;background:linear-gradient(180deg,#29bdf0,#0ca2d8)"></div><div class="a" style="left:782.90px;top:250.00px;width:1.30px;height:124.00px;background:#1e1e1e;"></div><div class="a" style="left:782.90px;top:372.80px;width:199.00px;height:1.30px;background:#1e1e1e;"></div></div>
</div></body></html>
